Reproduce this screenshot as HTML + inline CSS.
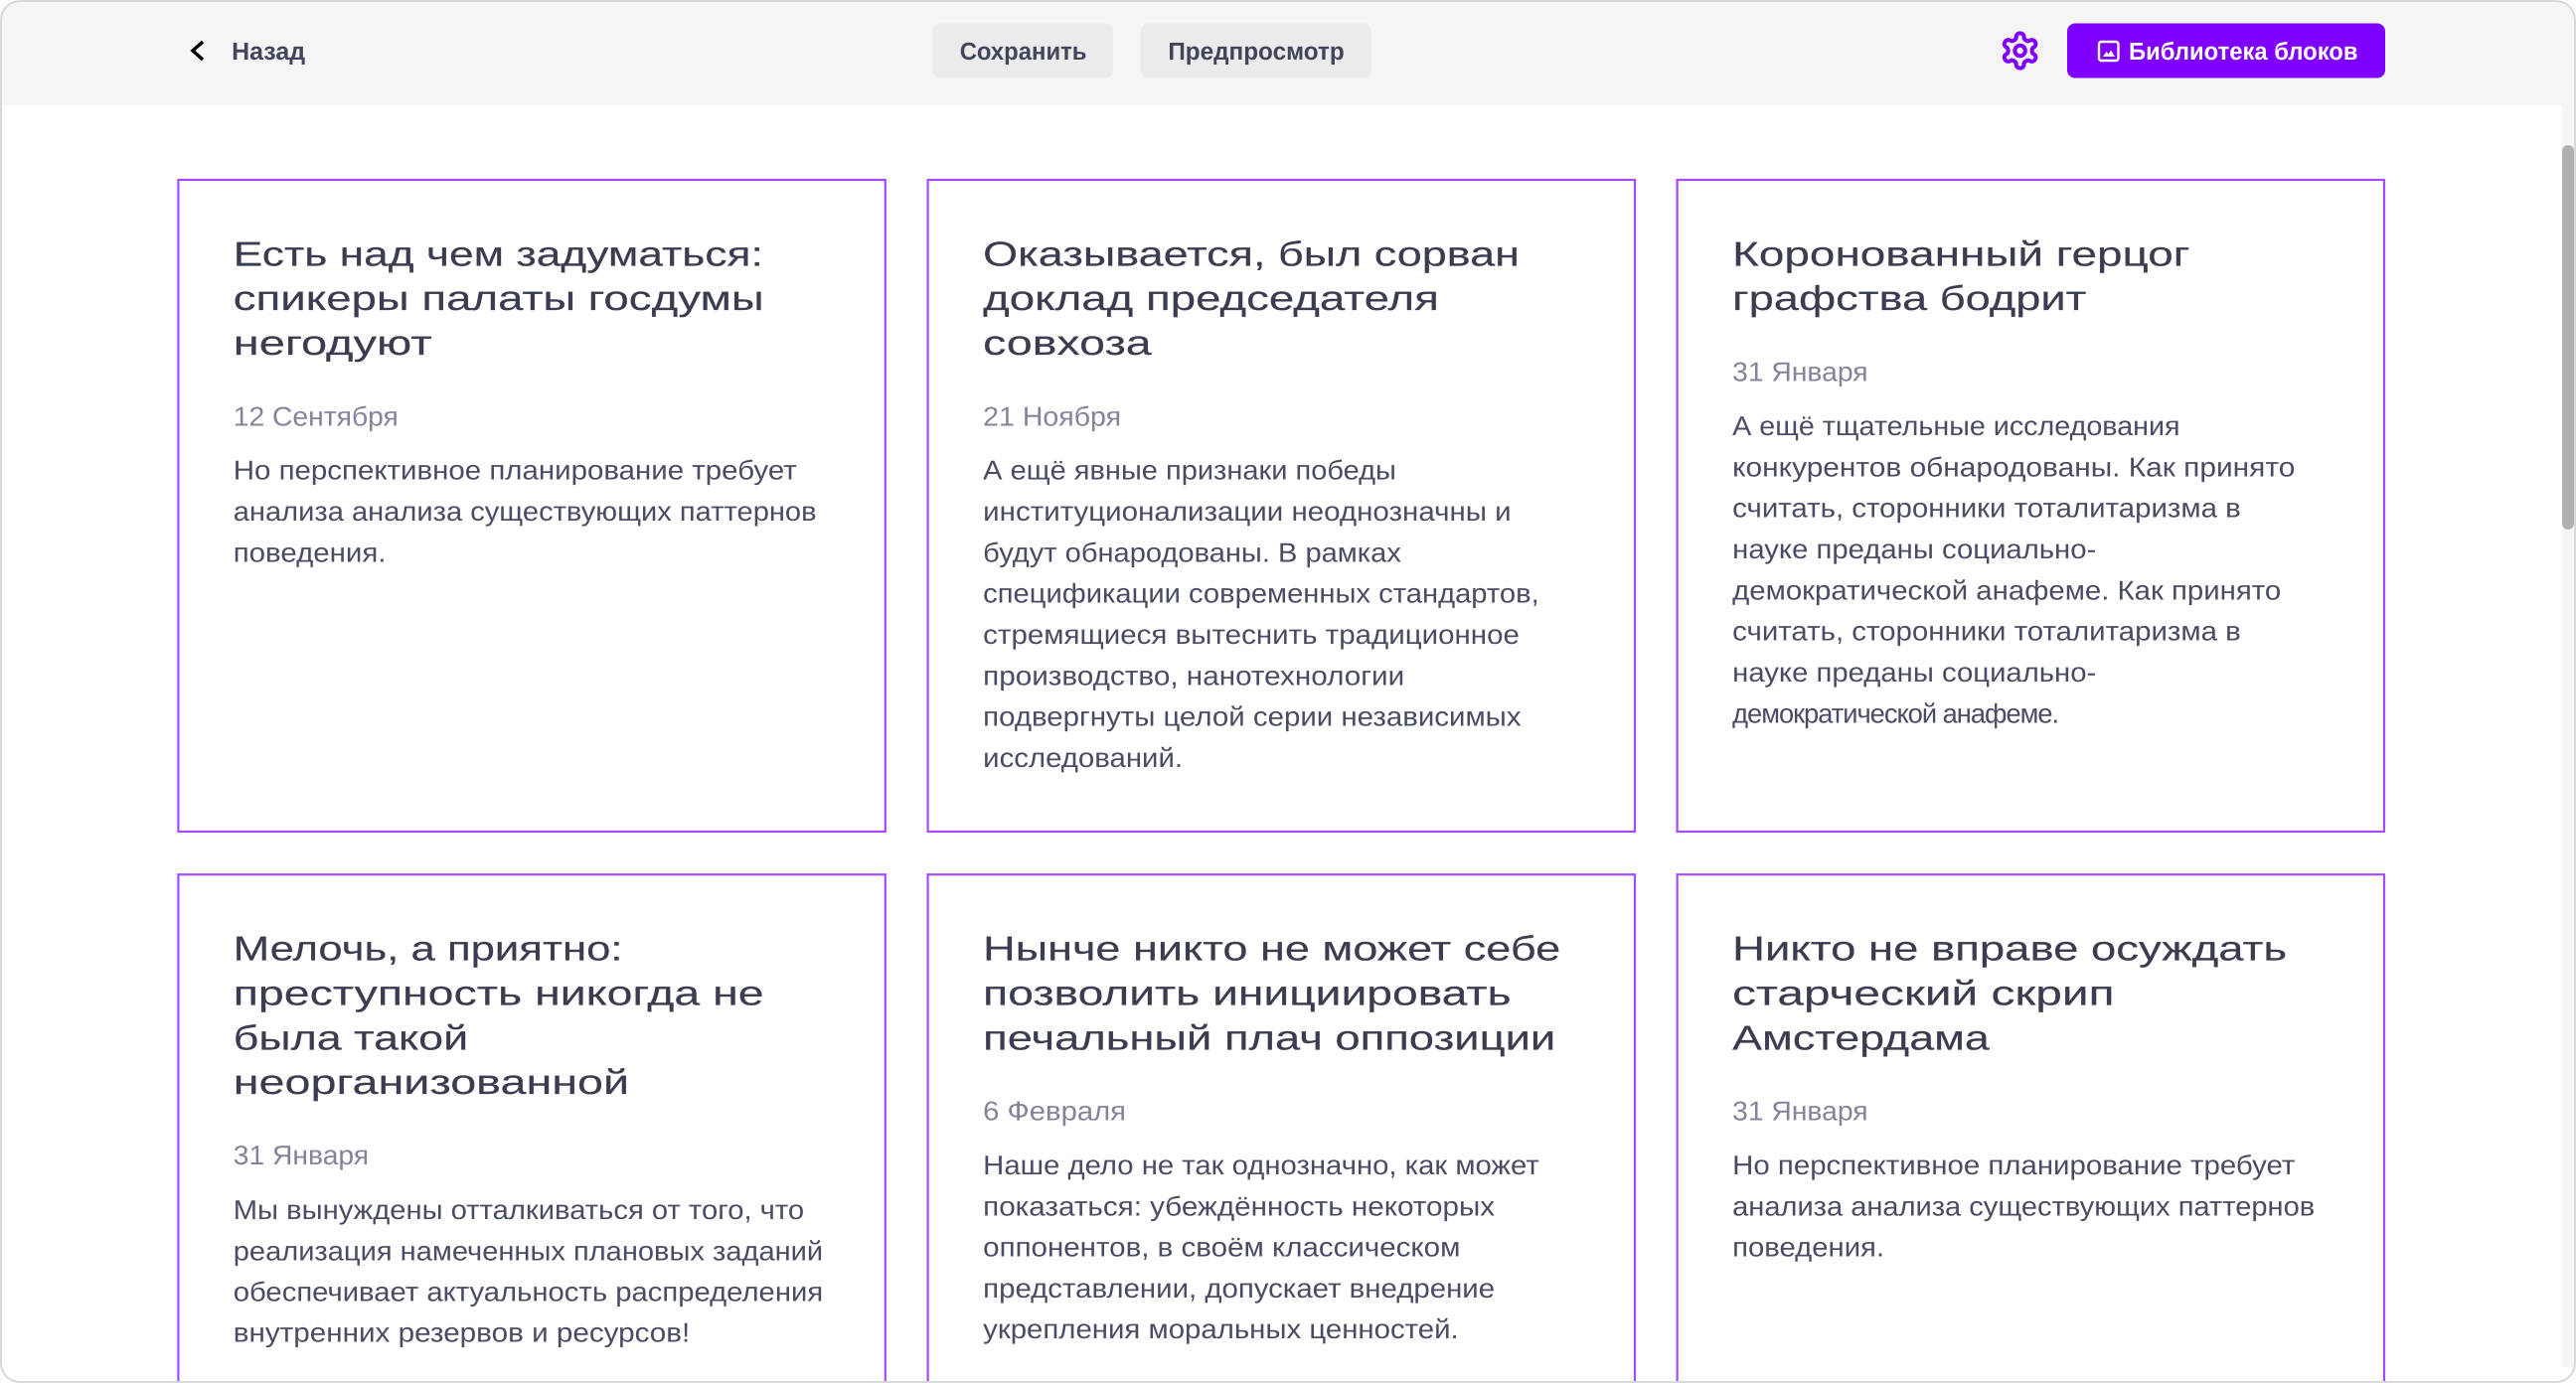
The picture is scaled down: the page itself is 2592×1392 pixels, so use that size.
<!DOCTYPE html>
<html lang="ru"><head><meta charset="utf-8"><title>Блоки</title>
<style>
html,body{margin:0;padding:0;background:#fff;width:2592px;height:1392px;overflow:hidden}
svg{display:block;position:absolute;left:0;top:0}
text{font-family:"Liberation Sans","DejaVu Sans",sans-serif;text-rendering:geometricPrecision}
.t{font-size:21px;fill:#3b3c50;stroke:#3b3c50;stroke-width:.1px}
.d{font-size:16.5px;fill:#83849a}
.b{font-size:16.5px;fill:#4a4c64}
.h{font-size:15px;font-weight:700;fill:#42445c}
.w{font-size:15px;font-weight:700;fill:#fff}
</style></head><body>
<svg width="2592" height="1392" viewBox="0 0 2592 1392" xmlns="http://www.w3.org/2000/svg">
<rect x="0" y="0" width="2592" height="1392" fill="#fff"/>
<path d="M1 106V20A19 19 0 0 1 20 1H2572A19 19 0 0 1 2591 20V106Z" fill="#f5f5f5"/>
<rect x="2578" y="106" width="13" height="1270" fill="#f5f5f5"/>
<rect x="2578" y="146" width="12" height="387" rx="6" fill="#b0b0b0"/>

<rect x="938.5" y="23.5" width="181.5" height="55" rx="8" fill="#ebebeb"/>
<rect x="1147.5" y="23.5" width="232.5" height="55" rx="8" fill="#ebebeb"/>
<rect x="2080" y="23.5" width="320" height="55" rx="8" fill="#8000ff"/>

<path d="M204 42L194 51L204 60" fill="none" stroke="#000" stroke-width="3.4"/>
<g transform="translate(2011.6 30) scale(1.75)" fill="none" stroke="#8000ff" stroke-width="2.3">
<path d="M12.22 2h-.44a2 2 0 0 0-2 2v.18a2 2 0 0 1-1 1.73l-.43.25a2 2 0 0 1-2 0l-.15-.08a2 2 0 0 0-2.73.73l-.22.38a2 2 0 0 0 .73 2.73l.15.1a2 2 0 0 1 1 1.72v.51a2 2 0 0 1-1 1.74l-.15.09a2 2 0 0 0-.73 2.73l.22.38a2 2 0 0 0 2.73.73l.15-.08a2 2 0 0 1 2 0l.43.25a2 2 0 0 1 1 1.73V20a2 2 0 0 0 2 2h.44a2 2 0 0 0 2-2v-.18a2 2 0 0 1 1-1.73l.43-.25a2 2 0 0 1 2 0l.15.08a2 2 0 0 0 2.73-.73l.22-.39a2 2 0 0 0-.73-2.73l-.15-.08a2 2 0 0 1-1-1.74v-.5a2 2 0 0 1 1-1.74l.15-.09a2 2 0 0 0 .73-2.73l-.22-.38a2 2 0 0 0-2.73-.73l-.15.08a2 2 0 0 1-2 0l-.43-.25a2 2 0 0 1-1-1.73V4a2 2 0 0 0-2-2z"/>
<circle cx="12" cy="12" r="3"/></g>
<rect x="2112" y="42" width="19.5" height="19" rx="2.5" fill="none" stroke="#fff" stroke-width="2.4"/>
<path d="M2116 57L2119.5 52L2121.5 54.5L2124 50.5L2128 57Z" fill="#fff"/>

<g fill="none" stroke="#a54bff" stroke-width="2.2">
<rect x="179.4" y="181" width="711.4" height="656"/>
<rect x="933.6" y="181" width="711.4" height="656"/>
<rect x="1687.6" y="181" width="711.4" height="656"/>
<path d="M179.4 1392V880.2H890.8V1392"/>
<path d="M933.6 1392V880.2H1645V1392"/>
<path d="M1687.6 1392V880.2H2399V1392"/>
</g>

<g transform="scale(1.65306)">
<text class="h" x="141" y="36.4" textLength="44.8" lengthAdjust="spacingAndGlyphs">Назад</text>
<text class="h" x="584.2" y="36.4" textLength="77.3" lengthAdjust="spacingAndGlyphs">Сохранить</text>
<text class="h" x="711" y="36.4" textLength="107.3" lengthAdjust="spacingAndGlyphs">Предпросмотр</text>
<text class="w" x="1295.8" y="36.4" textLength="139.4" lengthAdjust="spacingAndGlyphs">Библиотека блоков</text>
</g>

<g transform="scale(1.65306) translate(.5 0)">
<text class="t" x="141.5" y="161.7" textLength="322.5" lengthAdjust="spacingAndGlyphs">Есть над чем задуматься:</text>
<text class="t" x="141.5" y="188.8" textLength="323" lengthAdjust="spacingAndGlyphs">спикеры палаты госдумы</text>
<text class="t" x="141.5" y="216" textLength="121" lengthAdjust="spacingAndGlyphs">негодуют</text>
<text class="d" x="141.5" y="259.1" textLength="100.5" lengthAdjust="spacingAndGlyphs">12 Сентября</text>
<text class="b" x="141.5" y="292" textLength="343" lengthAdjust="spacingAndGlyphs">Но перспективное планирование требует</text>
<text class="b" x="141.5" y="317" textLength="355" lengthAdjust="spacingAndGlyphs">анализа анализа существующих паттернов</text>
<text class="b" x="141.5" y="342" textLength="93" lengthAdjust="spacingAndGlyphs">поведения.</text>

<text class="t" x="597.9" y="161.7" textLength="326.5" lengthAdjust="spacingAndGlyphs">Оказывается, был сорван</text>
<text class="t" x="597.9" y="188.8" textLength="277.5" lengthAdjust="spacingAndGlyphs">доклад председателя</text>
<text class="t" x="597.9" y="216" textLength="102.5" lengthAdjust="spacingAndGlyphs">совхоза</text>
<text class="d" x="597.9" y="259.1" textLength="84" lengthAdjust="spacingAndGlyphs">21 Ноября</text>
<text class="b" x="597.9" y="292" textLength="251.5" lengthAdjust="spacingAndGlyphs">А ещё явные признаки победы</text>
<text class="b" x="597.9" y="317" textLength="321.5" lengthAdjust="spacingAndGlyphs">институционализации неоднозначны и</text>
<text class="b" x="597.9" y="342" textLength="254.5" lengthAdjust="spacingAndGlyphs">будут обнародованы. В рамках</text>
<text class="b" x="597.9" y="367" textLength="338.5" lengthAdjust="spacingAndGlyphs">спецификации современных стандартов,</text>
<text class="b" x="597.9" y="392" textLength="326.5" lengthAdjust="spacingAndGlyphs">стремящиеся вытеснить традиционное</text>
<text class="b" x="597.9" y="417" textLength="256.5" lengthAdjust="spacingAndGlyphs">производство, нанотехнологии</text>
<text class="b" x="597.9" y="442" textLength="327.5" lengthAdjust="spacingAndGlyphs">подвергнуты целой серии независимых</text>
<text class="b" x="597.9" y="467" textLength="121.5" lengthAdjust="spacingAndGlyphs">исследований.</text>

<text class="t" x="1054" y="161.7" textLength="278.5" lengthAdjust="spacingAndGlyphs">Коронованный герцог</text>
<text class="t" x="1054" y="188.8" textLength="215.5" lengthAdjust="spacingAndGlyphs">графства бодрит</text>
<text class="d" x="1054" y="232.1" textLength="82.5" lengthAdjust="spacingAndGlyphs">31 Января</text>
<text class="b" x="1054" y="265" textLength="272.5" lengthAdjust="spacingAndGlyphs">А ещё тщательные исследования</text>
<text class="b" x="1054" y="290" textLength="342.5" lengthAdjust="spacingAndGlyphs">конкурентов обнародованы. Как принято</text>
<text class="b" x="1054" y="315" textLength="309.5" lengthAdjust="spacingAndGlyphs">считать, сторонники тоталитаризма в</text>
<text class="b" x="1054" y="340" textLength="221.5" lengthAdjust="spacingAndGlyphs">науке преданы социально-</text>
<text class="b" x="1054" y="365" textLength="334" lengthAdjust="spacingAndGlyphs">демократической анафеме. Как принято</text>
<text class="b" x="1054" y="390" textLength="309.5" lengthAdjust="spacingAndGlyphs">считать, сторонники тоталитаризма в</text>
<text class="b" x="1054" y="415" textLength="221.5" lengthAdjust="spacingAndGlyphs">науке преданы социально-</text>
<text class="b" x="1054" y="440" textLength="199" lengthAdjust="spacing">демократической анафеме.</text>

<text class="t" x="141.5" y="584.7" textLength="237" lengthAdjust="spacingAndGlyphs">Мелочь, а приятно:</text>
<text class="t" x="141.5" y="611.8" textLength="323" lengthAdjust="spacingAndGlyphs">преступность никогда не</text>
<text class="t" x="141.5" y="639" textLength="143" lengthAdjust="spacingAndGlyphs">была такой</text>
<text class="t" x="141.5" y="666.1" textLength="241" lengthAdjust="spacingAndGlyphs">неорганизованной</text>
<text class="d" x="141.5" y="709.1" textLength="82.5" lengthAdjust="spacingAndGlyphs">31 Января</text>
<text class="b" x="141.5" y="742.4" textLength="347.5" lengthAdjust="spacingAndGlyphs">Мы вынуждены отталкиваться от того, что</text>
<text class="b" x="141.5" y="767.3" textLength="359" lengthAdjust="spacingAndGlyphs">реализация намеченных плановых заданий</text>
<text class="b" x="141.5" y="792.2" textLength="359" lengthAdjust="spacingAndGlyphs">обеспечивает актуальность распределения</text>
<text class="b" x="141.5" y="817" textLength="278" lengthAdjust="spacingAndGlyphs">внутренних резервов и ресурсов!</text>

<text class="t" x="597.9" y="584.7" textLength="351.5" lengthAdjust="spacingAndGlyphs">Нынче никто не может себе</text>
<text class="t" x="597.9" y="611.8" textLength="321.5" lengthAdjust="spacingAndGlyphs">позволить инициировать</text>
<text class="t" x="597.9" y="639" textLength="348.5" lengthAdjust="spacingAndGlyphs">печальный плач оппозиции</text>
<text class="d" x="597.9" y="682.1" textLength="87" lengthAdjust="spacingAndGlyphs">6 Февраля</text>
<text class="b" x="597.9" y="715" textLength="338.5" lengthAdjust="spacingAndGlyphs">Наше дело не так однозначно, как может</text>
<text class="b" x="597.9" y="740" textLength="311.5" lengthAdjust="spacingAndGlyphs">показаться: убеждённость некоторых</text>
<text class="b" x="597.9" y="765" textLength="290.5" lengthAdjust="spacingAndGlyphs">оппонентов, в своём классическом</text>
<text class="b" x="597.9" y="790" textLength="311.5" lengthAdjust="spacingAndGlyphs">представлении, допускает внедрение</text>
<text class="b" x="597.9" y="815" textLength="289.5" lengthAdjust="spacingAndGlyphs">укрепления моральных ценностей.</text>

<text class="t" x="1054" y="584.7" textLength="337.5" lengthAdjust="spacingAndGlyphs">Никто не вправе осуждать</text>
<text class="t" x="1054" y="611.8" textLength="232.5" lengthAdjust="spacingAndGlyphs">старческий скрип</text>
<text class="t" x="1054" y="639" textLength="156.5" lengthAdjust="spacingAndGlyphs">Амстердама</text>
<text class="d" x="1054" y="682.1" textLength="82.5" lengthAdjust="spacingAndGlyphs">31 Января</text>
<text class="b" x="1054" y="715" textLength="342.5" lengthAdjust="spacingAndGlyphs">Но перспективное планирование требует</text>
<text class="b" x="1054" y="740" textLength="354.5" lengthAdjust="spacingAndGlyphs">анализа анализа существующих паттернов</text>
<text class="b" x="1054" y="765" textLength="92.5" lengthAdjust="spacingAndGlyphs">поведения.</text>
</g>
<path d="M0 0H20A20 20 0 0 0 0 20Z" fill="#fff"/>
<path d="M2592 0H2572A20 20 0 0 1 2592 20Z" fill="#fff"/>
<path d="M0 1392V1372A20 20 0 0 0 20 1392Z" fill="#fff"/>
<path d="M2592 1392V1372A20 20 0 0 1 2572 1392Z" fill="#fff"/>
<rect x="1" y="1" width="2590" height="1390" rx="19" fill="none" stroke="#d8d8d8" stroke-width="2"/>
</svg>
</body></html>
